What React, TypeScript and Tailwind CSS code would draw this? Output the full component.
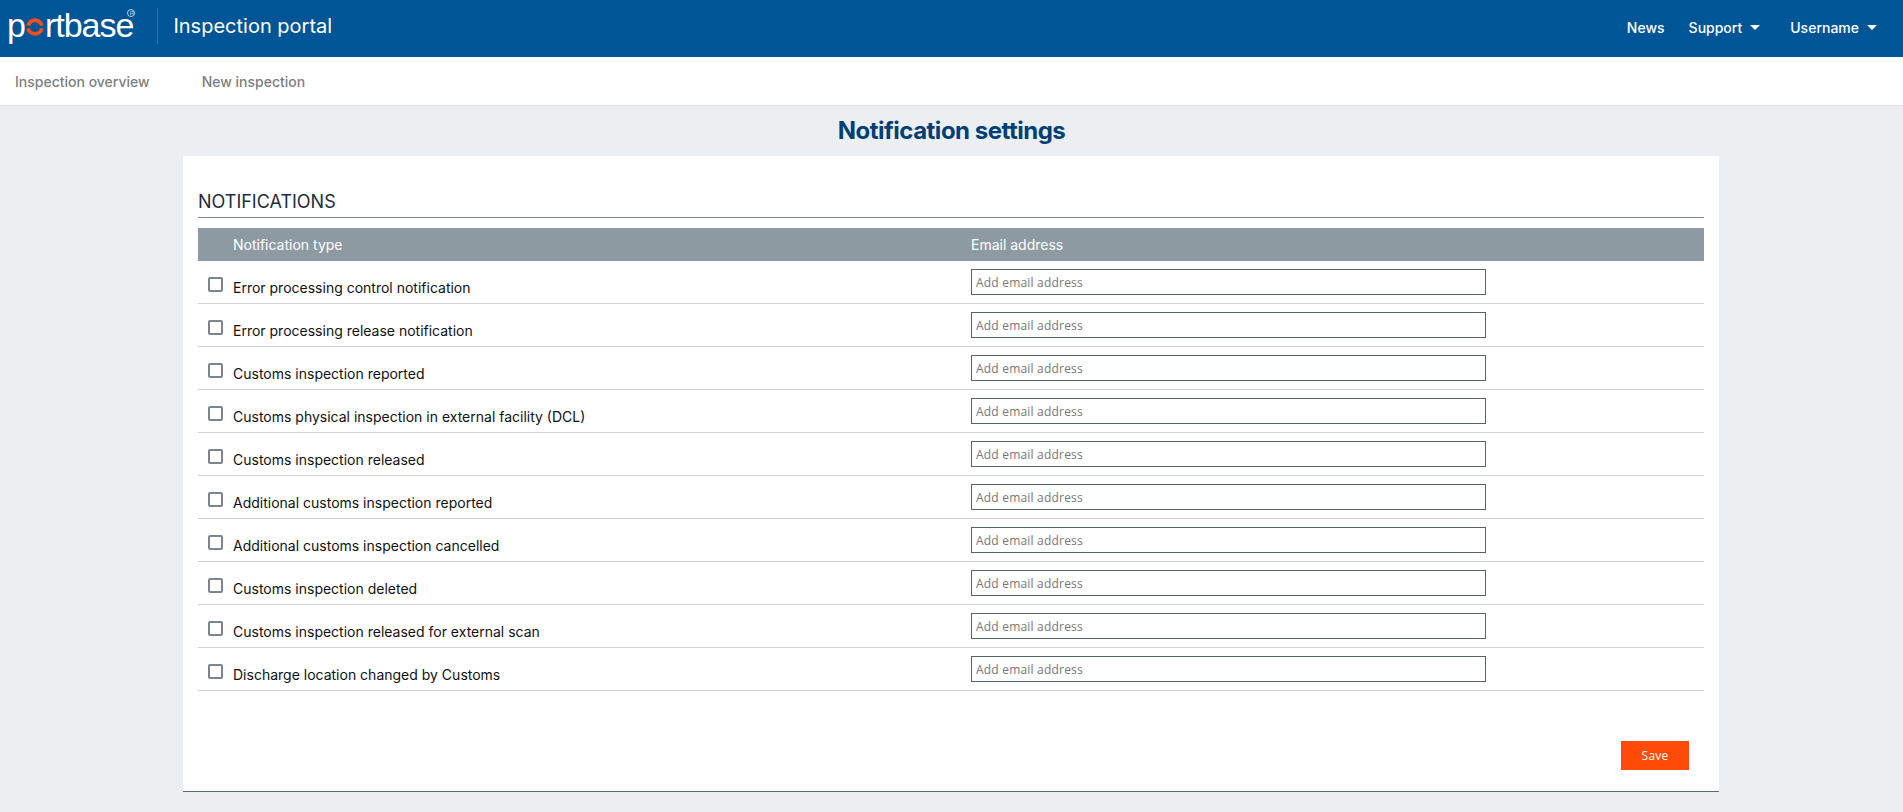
const notifications = [
  'Error processing control notification',
  'Error processing release notification',
  'Customs inspection reported',
  'Customs physical inspection in external facility (DCL)',
  'Customs inspection released',
  'Additional customs inspection reported',
  'Additional customs inspection cancelled',
  'Customs inspection deleted',
  'Customs inspection released for external scan',
  'Discharge location changed by Customs',
];

function Caret() {
  return <span className="ml-[8px] inline-block border-x-[5px] border-t-[5px] border-x-transparent border-t-white" />;
}

function Logo() {
  return (
    <div className="relative mb-[3px] flex items-center font-['Liberation_Sans',sans-serif] text-[34px] leading-none tracking-[-1px] text-white">
      <span>p</span>
      <svg viewBox="0 0 20 20" className="mx-[1px] mt-[5px] h-[18px] w-[18px]" fill="none" strokeWidth="4.5">
        <path d="M2.4 8.5A7.8 7.8 0 0 1 17.6 8.5" stroke="#f04e23" />
        <path d="M2.4 11.5A7.8 7.8 0 0 0 17.6 11.5" stroke="#f04e23" />
      </svg>
      <span>rtbase</span>
      <span className="absolute right-[-2px] top-[1px] flex h-[8px] w-[8px] items-center justify-center rounded-full border border-[#b9d3e6] text-[6px] leading-none text-[#b9d3e6]">
        R
      </span>
    </div>
  );
}

function Row({ label }: { label: string }) {
  return (
    <div className="flex h-[43px] items-center border-b border-[#cdd2d5]">
      <div className="flex w-[35px] shrink-0 justify-end pr-[10px]">
        <span className="mt-[5px] h-[15px] w-[15px] rounded-[2px] border-2 border-[#7d858c] bg-white" />
      </div>
      <div className="w-[738px] shrink-0 pt-[10px] text-[14px] text-[#111]">{label}</div>
      <input
        type="text"
        placeholder="Add email address"
        className="h-[26px] w-[515px] border border-[#5a6268] bg-white px-[4px] font-['Open_Sans',sans-serif] text-[12px] tracking-[0.2px] placeholder:text-[#777]"
      />
    </div>
  );
}

export default function App() {
  return (
    <div className="flex min-h-[812px] flex-col bg-[#eceff1] font-['Inter',sans-serif]">
      <header className="flex h-[57px] items-center justify-between bg-[#005596] pl-[7px] pr-[26px] text-white">
        <div className="mb-[5px] flex items-center">
          <Logo />
          <div className="ml-[24px] h-[36px] w-px bg-[#2b72a8]" />
          <div className="ml-[15px] text-[20px] leading-none">Inspection portal</div>
        </div>
        <nav className="mb-[3px] flex items-center text-[14px] font-medium">
          <span>News</span>
          <span className="ml-[24px] flex items-center">
            Support
            <Caret />
          </span>
          <span className="ml-[30px] flex items-center">
            Username
            <Caret />
          </span>
        </nav>
      </header>

      <div className="flex h-[49px] items-center gap-[52px] border-b border-[#dfe3e6] bg-white pl-[15px] text-[14px] font-medium text-[#7b7f83]">
        <span>Inspection overview</span>
        <span>New inspection</span>
      </div>

      <h1 className="flex h-[50px] items-center justify-center text-[24px] font-bold tracking-[-0.5px] text-[#003f73]">
        Notification settings
      </h1>

      <main className="ml-[183px] mr-[184px] h-[636px] border-b border-[#5a6a72] bg-white px-[15px] pt-[33px]">
        <h2 className="h-[29px] border-b border-[#7c8a94] pt-[1px] text-[18px] leading-[24px] text-[#1f2d3a]">NOTIFICATIONS</h2>

        <div className="mt-[10px] flex h-[33px] items-center bg-[#8d9aa2] text-[14px] text-white">
          <div className="w-[35px]" />
          <div className="w-[738px]">Notification type</div>
          <div>Email address</div>
        </div>

        {notifications.map((n) => (
          <Row key={n} label={n} />
        ))}

        <div className="mt-[50px] flex justify-end pr-[15px]">
          <button className="h-[29px] w-[68px] bg-[#ff4b07] pt-[1px] font-['Open_Sans',sans-serif] text-[12px] tracking-[0.2px] text-white">
            Save
          </button>
        </div>
      </main>
    </div>
  );
}
